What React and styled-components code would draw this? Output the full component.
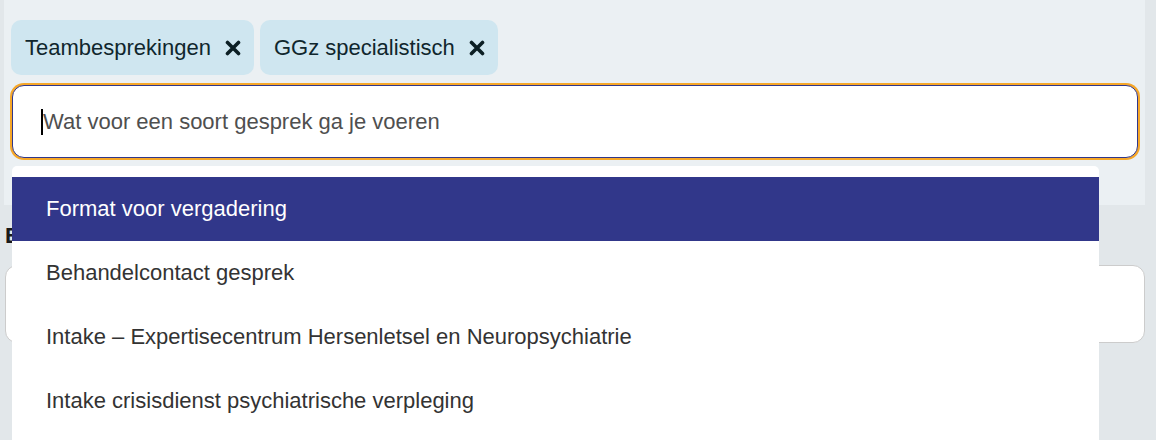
import React, { useState } from 'react'
import styled, { createGlobalStyle } from 'styled-components'

const GlobalStyle = createGlobalStyle`
  body {
    margin: 0;
    padding: 0;
    background: #e2e7ea;
    font-family: "Liberation Sans", Arial, Helvetica, sans-serif;
  }
`

const OPTIONS = [
  'Format voor vergadering',
  'Behandelcontact gesprek',
  'Intake – Expertisecentrum Hersenletsel en Neuropsychiatrie',
  'Intake crisisdienst psychiatrische verpleging',
]

const CloseIcon = () => (
  <svg width='16' height='16' viewBox='0 0 16 16'>
    <path d='M2.5 2.5 L13.5 13.5 M13.5 2.5 L2.5 13.5' stroke='currentColor' strokeWidth='3.6' strokeLinecap='round' fill='none' />
  </svg>
)

const App = () => {
  const [tags, setTags] = useState(['Teambesprekingen', 'GGz specialistisch'])
  const [active, setActive] = useState(0)
  const [query, setQuery] = useState('')

  return (
    <>
      <GlobalStyle />
      <Page>
        <Panel>
          <TagRow>
            {tags.map(tag => (
              <Tag key={tag}>
                {tag}
                <RemoveButton onClick={() => setTags(tags.filter(t => t !== tag))}>
                  <CloseIcon />
                </RemoveButton>
              </Tag>
            ))}
          </TagRow>
          <SearchWrap>
            <SearchInput
              placeholder='Wat voor een soort gesprek ga je voeren'
              value={query}
              onChange={event => setQuery(event.target.value)}
            />
            {!query && <Caret />}
            <Dropdown>
              {OPTIONS.map((option, i) => (
                <Option key={option} $active={i === active} onMouseEnter={() => setActive(i)}>
                  {option}
                </Option>
              ))}
            </Dropdown>
          </SearchWrap>
        </Panel>
        <Field>
          <Label>Extra toelichting</Label>
          <TextBox />
        </Field>
      </Page>
    </>
  )
}

export default App

const Page = styled.div`
  padding-left: 4px;
  width: 1141px;
  height: 440px;
  overflow: hidden;
`
const Panel = styled.section`
  background: #ebf0f3;
  padding: 20px 7px 47px 7px;
`
const TagRow = styled.div`
  display: flex;
  gap: 6px;
  margin-bottom: 10px;
`
const Tag = styled.span`
  display: flex;
  align-items: center;
  gap: 14px;
  height: 55px;
  box-sizing: border-box;
  padding: 0 13px 0 14px;
  border-radius: 10px;
  background: #cfe6f0;
  color: #10262d;
  font-size: 22px;
`
const RemoveButton = styled.button`
  display: flex;
  align-items: center;
  padding: 0;
  border: none;
  background: none;
  color: #0c1f24;
  cursor: pointer;
`
const SearchWrap = styled.div`
  position: relative;
  margin-left: 1px;
`
const SearchInput = styled.input`
  display: block;
  width: 100%;
  height: 73px;
  box-sizing: border-box;
  padding: 0 28px 0 30px;
  border: 1px solid #31378a;
  border-radius: 12px;
  box-shadow: 0 0 0 2px #f6a728;
  outline: none;
  background: #fff;
  font-family: inherit;
  font-size: 22px;
  color: #222;

  &::placeholder {
    color: #4f4f4f;
  }
`
const Caret = styled.span`
  position: absolute;
  left: 29px;
  top: 24px;
  width: 2px;
  height: 26px;
  background: #000;
  pointer-events: none;
`
const Dropdown = styled.ul`
  position: absolute;
  top: 81px;
  left: 0;
  width: 1087px;
  margin: 0;
  padding: 11px 0 7px 0;
  list-style: none;
  background: #fff;
  border-radius: 5px 5px 0 0;
  z-index: 2;
`
const Option = styled.li`
  height: 64px;
  display: flex;
  align-items: center;
  padding-left: 34px;
  font-size: 22px;
  color: ${p => (p.$active ? '#fff' : '#333')};
  background: ${p => (p.$active ? '#31378a' : 'transparent')};
  cursor: pointer;
`
const Field = styled.div`
  padding: 18px 0 0 1px;
`
const Label = styled.label`
  display: block;
  font-size: 22px;
  font-weight: bold;
  color: #1a1a1a;
  margin-bottom: 16px;
`
const TextBox = styled.div`
  height: 78px;
  box-sizing: border-box;
  background: #fff;
  border: 1px solid #ccc;
  border-radius: 12px;
`
